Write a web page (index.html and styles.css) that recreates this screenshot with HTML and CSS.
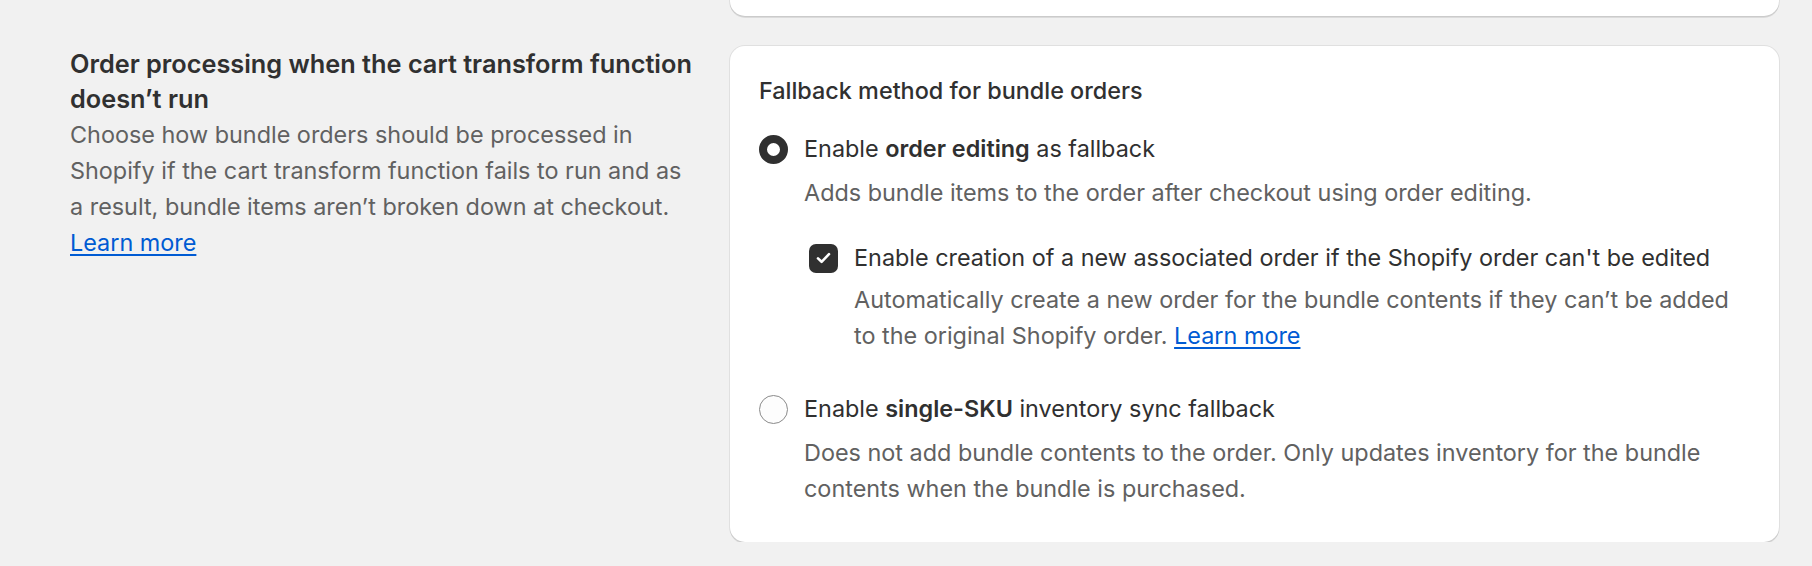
FILE: index.html
```html
<!DOCTYPE html>
<html lang="en">
<head>
<meta charset="utf-8">
<title>Bundle settings</title>
<link rel="stylesheet" href="styles.css">
</head>
<body>
<div class="page">
  <div class="row">
    <div class="annotation-empty"></div>
    <div class="card prev-card"></div>
  </div>
  <section class="row section">
    <div class="annotation">
      <h2 class="annotation-title">Order processing when the cart transform function doesn’t run</h2>
      <p class="annotation-text">Choose how bundle orders should be processed in Shopify if the cart transform function fails to run and as a result, bundle items aren’t broken down at checkout. <a class="link" href="#">Learn more</a></p>
    </div>
    <div class="card main-card">
      <div class="legend">Fallback method for bundle orders</div>
      <div class="choices">
        <div class="choice">
          <div class="choice-row">
            <span class="radio radio-checked"></span>
            <span class="choice-label">Enable <b>order editing</b> as fallback</span>
          </div>
          <div class="choice-desc">Adds bundle items to the order after checkout using order editing.</div>
          <div class="children">
            <div class="choice-row">
              <span class="checkbox">
                <svg width="15" height="12" viewBox="0 0 15 12" fill="none"><path d="M2 6.4 L5.6 9.8 L13 2.2" stroke="#fff" stroke-width="2.6" stroke-linecap="round" stroke-linejoin="round"/></svg>
              </span>
              <span class="choice-label">Enable creation of a new associated order if the Shopify order can't be edited</span>
            </div>
            <div class="choice-desc child-desc">Automatically create a new order for the bundle contents if they can’t be added to the original Shopify order. <a class="link" href="#">Learn more</a></div>
          </div>
        </div>
        <div class="choice">
          <div class="choice-row">
            <span class="radio"></span>
            <span class="choice-label">Enable <b>single-SKU</b> inventory sync fallback</span>
          </div>
          <div class="choice-desc">Does not add bundle contents to the order. Only updates inventory for the bundle contents when the bundle is purchased.</div>
        </div>
      </div>
    </div>
  </section>
</div>
</body>
</html>
```

FILE: styles.css
```css
* {
  box-sizing: border-box;
}

html, body {
  margin: 0;
  padding: 0;
  background: #f1f1f1;
}

body {
  font-family: Inter, "Noto Sans", "Liberation Sans", sans-serif;
  font-size: 23.4px;
  line-height: 36px;
  color: #303030;
}

.page {
  padding: 0 33px 0 70px;
}

.row {
  display: grid;
  grid-template-columns: 631px 1049px;
  column-gap: 29px;
}

.section {
  margin-top: 30px;
}

.card {
  background: #ffffff;
  border-radius: 15px;
  box-shadow: 0 0 0 1px rgba(0, 0, 0, 0.07), 0 2px 0 rgba(0, 0, 0, 0.09);
}

.prev-card {
  height: 16px;
  border-radius: 0 0 15px 15px;
}

.annotation-title {
  margin: 0;
  font-size: 25.3px;
  line-height: 35px;
  font-weight: 600;
  color: #303030;
}

.annotation-text {
  margin: 1px 0 0;
  color: #616161;
}

.link {
  color: #005bd3;
  text-decoration: underline;
  text-underline-offset: 3px;
  text-decoration-thickness: 2px;
}

.main-card {
  padding: 27px 29px 35px 29px;
}

.legend {
  font-weight: 450;
  color: #303030;
}

.choices {
  margin-top: 22px;
  display: flex;
  flex-direction: column;
  gap: 37px;
}

.choice-row {
  display: flex;
  align-items: center;
  gap: 16px;
}

.choice-label b {
  font-weight: 600;
}

.choice-desc {
  margin-top: 8px;
  padding-left: 45px;
  color: #616161;
}

.child-desc {
  margin-top: 6px;
}

.children {
  margin-top: 29px;
  padding-left: 50px;
}

.radio {
  flex: none;
  width: 29px;
  height: 29px;
  border-radius: 50%;
  border: 1.5px solid #8a8a8a;
  background: #fdfdfd;
}

.radio-checked {
  border: 8.5px solid #303030;
  background: #ffffff;
}

.checkbox {
  flex: none;
  width: 29px;
  height: 29px;
  border-radius: 7px;
  background: #303030;
  display: flex;
  align-items: center;
  justify-content: center;
}
```
